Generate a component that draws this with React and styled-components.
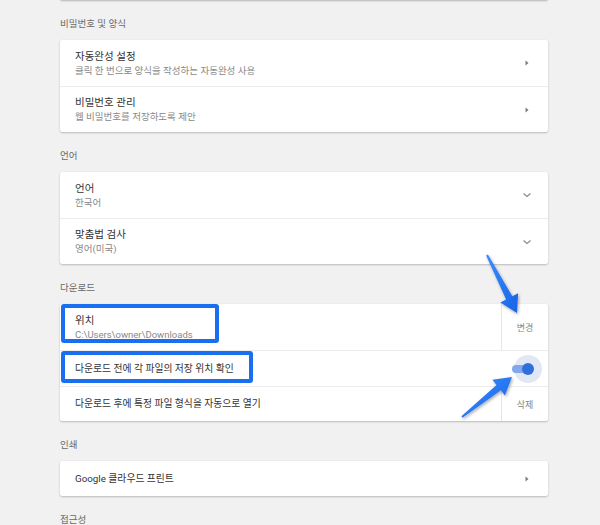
import React from 'react';
import styled, {createGlobalStyle} from "styled-components";

const GlobalStyle = createGlobalStyle`
  html, body {
    margin: 0;
    padding: 0;
    background: #f1f1f1;
  }
  body {
    font-family: Roboto, "Noto Sans CJK KR", "Noto Sans", sans-serif;
  }
`

const RightTriangle = () => (
    <svg width="10" height="10" viewBox="0 0 10 10">
        <polygon points="3.5,2.5 6.5,5 3.5,7.5" fill="#7a7a7a"/>
    </svg>
)

const ChevronDown = () => (
    <svg width="10" height="10" viewBox="0 0 10 10">
        <polyline points="1.5,3.5 5,6.5 8.5,3.5" fill="none" stroke="#8a8a8a" strokeWidth="1.2"/>
    </svg>
)

const Arrows = () => (
    <ArrowLayer width="600" height="525" viewBox="0 0 600 525">
        <defs>
            <linearGradient id="arrowBlue" x1="0" y1="0" x2="1" y2="1">
                <stop offset="0" stopColor="#3b8cff"/>
                <stop offset="1" stopColor="#1764e6"/>
            </linearGradient>
            <filter id="arrowShadow" x="-20%" y="-20%" width="140%" height="140%">
                <feDropShadow dx="1" dy="1.5" stdDeviation="1.5" floodColor="#000" floodOpacity="0.35"/>
            </filter>
        </defs>
        <polygon
            points="486.1,255.5 506.1,299.5 500.3,302.5 517,313 518.1,293.3 512.3,296.3 487.9,254.5"
            fill="url(#arrowBlue)" filter="url(#arrowShadow)"/>
        <polygon
            points="462.6,417.8 500.9,390.3 504.9,395.4 512,377 492.4,379.8 496.5,384.9 461.4,416.2"
            fill="url(#arrowBlue)" filter="url(#arrowShadow)"/>
    </ArrowLayer>
)

const App = () => {
    return (
        <>
            <GlobalStyle/>
            <Page>
                <PrevCard/>
                <SectionTitle>비밀번호 및 양식</SectionTitle>
                <Card>
                    <Row height={46}>
                        <Labels>
                            <Title>자동완성 설정</Title>
                            <Sub>클릭 한 번으로 양식을 작성하는 자동완성 사용</Sub>
                        </Labels>
                        <IconBox><RightTriangle/></IconBox>
                    </Row>
                    <Row height={46}>
                        <Labels>
                            <Title>비밀번호 관리</Title>
                            <Sub>웹 비밀번호를 저장하도록 제안</Sub>
                        </Labels>
                        <IconBox><RightTriangle/></IconBox>
                    </Row>
                </Card>

                <SectionTitle>언어</SectionTitle>
                <Card>
                    <Row height={46}>
                        <Labels>
                            <Title>언어</Title>
                            <Sub>한국어</Sub>
                        </Labels>
                        <IconBox><ChevronDown/></IconBox>
                    </Row>
                    <Row height={46}>
                        <Labels>
                            <Title>맞춤법 검사</Title>
                            <Sub>영어(미국)</Sub>
                        </Labels>
                        <IconBox><ChevronDown/></IconBox>
                    </Row>
                </Card>

                <SectionTitle>다운로드</SectionTitle>
                <Card>
                    <Row height={46}>
                        <HighlightBox width={158} height={39}/>
                        <Labels>
                            <Title>위치</Title>
                            <Sub>C:\Users\owner\Downloads</Sub>
                        </Labels>
                        <ActionCell>변경</ActionCell>
                    </Row>
                    <Row height={36}>
                        <HighlightBox width={192} height={32}/>
                        <Labels>
                            <Label>다운로드 전에 각 파일의 저장 위치 확인</Label>
                        </Labels>
                        <Toggle>
                            <Halo/>
                            <Track/>
                            <Knob/>
                        </Toggle>
                    </Row>
                    <Row height={35}>
                        <Labels>
                            <Label>다운로드 후에 특정 파일 형식을 자동으로 열기</Label>
                        </Labels>
                        <ActionCell>삭제</ActionCell>
                    </Row>
                </Card>

                <SectionTitle>인쇄</SectionTitle>
                <Card>
                    <Row height={35}>
                        <Labels>
                            <Label>Google 클라우드 프린트</Label>
                        </Labels>
                        <IconBox><RightTriangle/></IconBox>
                    </Row>
                </Card>

                <SectionTitle>접근성</SectionTitle>
                <Arrows/>
            </Page>
        </>
    )
}

export default App

const Page = styled.div`
  position: relative;
  width: 600px;
  height: 525px;
  overflow: hidden;
  background: #f1f1f1;
  display: flex;
  flex-direction: column;
  padding: 0 52px 0 60px;
  box-sizing: border-box;
`

const PrevCard = styled.div`
  margin-top: -3px;
  height: 3px;
  flex-shrink: 0;
  background: #fff;
  border-radius: 0 0 2px 2px;
  box-shadow: 0 1px 2px rgba(0, 0, 0, 0.25);
`

const SectionTitle = styled.div`
  flex-shrink: 0;
  height: 40px;
  box-sizing: border-box;
  padding-top: 17px;
  line-height: 14px;
  font-size: 9.5px;
  color: #6a6a6a;
`

const Card = styled.div`
  flex-shrink: 0;
  background: #fff;
  border-radius: 2px;
  box-shadow: 0 1px 2px rgba(0, 0, 0, 0.22), 0 0 1px rgba(0, 0, 0, 0.08);
`

const Row = styled.div`
  position: relative;
  display: flex;
  align-items: center;
  height: ${({height}) => height}px;
  box-sizing: border-box;
  padding-left: 15px;

  & + & {
    border-top: 1px solid #ececec;
  }
`

const Labels = styled.div`
  flex: 1;
  display: flex;
  flex-direction: column;
  justify-content: center;
  min-width: 0;
`

const Title = styled.div`
  font-size: 10.5px;
  line-height: 14px;
  color: #333;
`

const Sub = styled.div`
  font-size: 9.5px;
  line-height: 13px;
  color: #888;
`

const Label = styled.div`
  font-size: 9.8px;
  line-height: 14px;
  color: #333;
`

const IconBox = styled.div`
  width: 10px;
  height: 10px;
  margin-right: 16px;
  display: flex;
`

const ActionCell = styled.div`
  align-self: stretch;
  width: 46px;
  border-left: 1px solid #e6e6e6;
  display: flex;
  align-items: center;
  justify-content: center;
  font-size: 9px;
  color: #858585;
`

const Toggle = styled.div`
  position: relative;
  width: 22px;
  height: 12px;
  margin-right: 14px;
`

const Halo = styled.div`
  position: absolute;
  right: -8px;
  top: -8px;
  width: 28px;
  height: 28px;
  border-radius: 50%;
  background: #e2e7f6;
`

const Track = styled.div`
  position: absolute;
  left: 0;
  top: 2px;
  width: 20px;
  height: 8px;
  border-radius: 4px;
  background: #82a8ec;
`

const Knob = styled.div`
  position: absolute;
  right: 0;
  top: 0;
  width: 12px;
  height: 12px;
  border-radius: 50%;
  background: #2f6fdc;
`

const HighlightBox = styled.div`
  position: absolute;
  left: 1px;
  top: 0;
  width: ${({width}) => width}px;
  height: ${({height}) => height}px;
  box-sizing: border-box;
  border: 4px solid #1a6ef0;
  border-radius: 3px;
  pointer-events: none;
`

const ArrowLayer = styled.svg`
  position: absolute;
  left: 0;
  top: 0;
  pointer-events: none;
`
